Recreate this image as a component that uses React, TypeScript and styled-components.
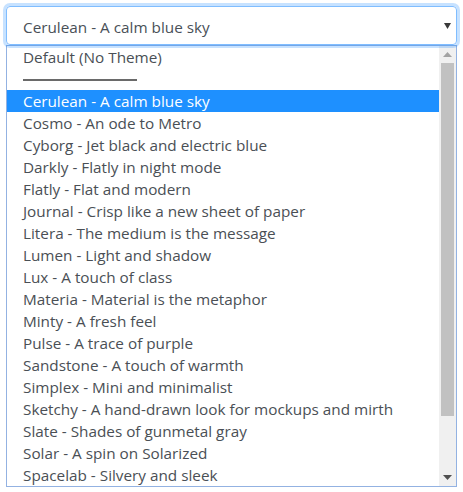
import React from "react";
import styled, { createGlobalStyle } from "styled-components";

const Global = createGlobalStyle`
  html, body { margin: 0; padding: 0; background: #ffffff; }
  body { font-family: "Open Sans", "Noto Sans", sans-serif; }
`;

const Page = styled.div`
  padding: 6px 0 0 6px;
  width: 451px;
`;

const Select = styled.div`
  box-sizing: border-box;
  height: 39px;
  width: 451px;
  border: 1px solid #80bdff;
  border-radius: 4px;
  box-shadow: 0 0 0 3px rgba(0, 123, 255, 0.22);
  display: flex;
  align-items: center;
  justify-content: space-between;
  padding: 0 5px 0 16px;
  font-size: 15.3px;
  color: #495057;
  position: relative;
  z-index: 1;
`;

const Value = styled.span`
  margin-top: 2px;
`;

const Caret = styled.svg`
  width: 7px;
  height: 7px;
  margin-top: -1px;
`;

const ListBox = styled.div`
  box-sizing: border-box;
  width: 451px;
  height: 442px;
  border: 1px solid #93b2e2;
  display: flex;
  background: #fff;
`;

const Options = styled.div`
  flex: 1;
  overflow: hidden;
`;

const Option = styled.div<{ $selected?: boolean }>`
  height: 22px;
  line-height: 22px;
  padding-left: 16px;
  font-size: 15.3px;
  white-space: nowrap;
  color: ${(p) => (p.$selected ? "#ffffff" : "#4a4f55")};
  background: ${(p) => (p.$selected ? "#1e90ff" : "transparent")};
`;

const SeparatorRow = styled.div`
  height: 22px;
  padding-left: 16px;
  display: flex;
  align-items: center;
`;

const SeparatorLine = styled.div`
  width: 114px;
  height: 2px;
  background: #6a6a6a;
  margin-top: 1px;
`;

const Scrollbar = styled.div`
  width: 17px;
  background: #f0f0f0;
  display: flex;
  flex-direction: column;
`;

const ArrowButton = styled.div`
  height: 17px;
  display: flex;
  align-items: center;
  justify-content: center;
`;

const Track = styled.div`
  flex: 1;
  padding: 0 2px;
`;

const Thumb = styled.div`
  height: 353px;
  background: #c1c1c1;
`;

const themes = [
  "Cerulean - A calm blue sky",
  "Cosmo - An ode to Metro",
  "Cyborg - Jet black and electric blue",
  "Darkly - Flatly in night mode",
  "Flatly - Flat and modern",
  "Journal - Crisp like a new sheet of paper",
  "Litera - The medium is the message",
  "Lumen - Light and shadow",
  "Lux - A touch of class",
  "Materia - Material is the metaphor",
  "Minty - A fresh feel",
  "Pulse - A trace of purple",
  "Sandstone - A touch of warmth",
  "Simplex - Mini and minimalist",
  "Sketchy - A hand-drawn look for mockups and mirth",
  "Slate - Shades of gunmetal gray",
  "Solar - A spin on Solarized",
  "Spacelab - Silvery and sleek",
];

const Tri = ({ up, color }: { up?: boolean; color: string }) => (
  <svg width="9" height="5" viewBox="0 0 9 5">
    {up ? (
      <polygon points="0,5 9,5 4.5,0" fill={color} />
    ) : (
      <polygon points="0,0 9,0 4.5,5" fill={color} />
    )}
  </svg>
);

export default function App() {
  return (
    <>
      <Global />
      <Page>
        <Select>
          <Value>Cerulean - A calm blue sky</Value>
          <Caret viewBox="0 0 7 7">
            <polygon points="0,1 7,1 3.5,7" fill="#3a3a3a" />
          </Caret>
        </Select>
        <ListBox>
          <Options>
            <Option>Default (No Theme)</Option>
            <SeparatorRow>
              <SeparatorLine />
            </SeparatorRow>
            {themes.map((t, i) => (
              <Option key={t} $selected={i === 0}>
                {t}
              </Option>
            ))}
          </Options>
          <Scrollbar>
            <ArrowButton>
              <Tri up color="#a3a3a3" />
            </ArrowButton>
            <Track>
              <Thumb />
            </Track>
            <ArrowButton>
              <Tri color="#505050" />
            </ArrowButton>
          </Scrollbar>
        </ListBox>
      </Page>
    </>
  );
}
